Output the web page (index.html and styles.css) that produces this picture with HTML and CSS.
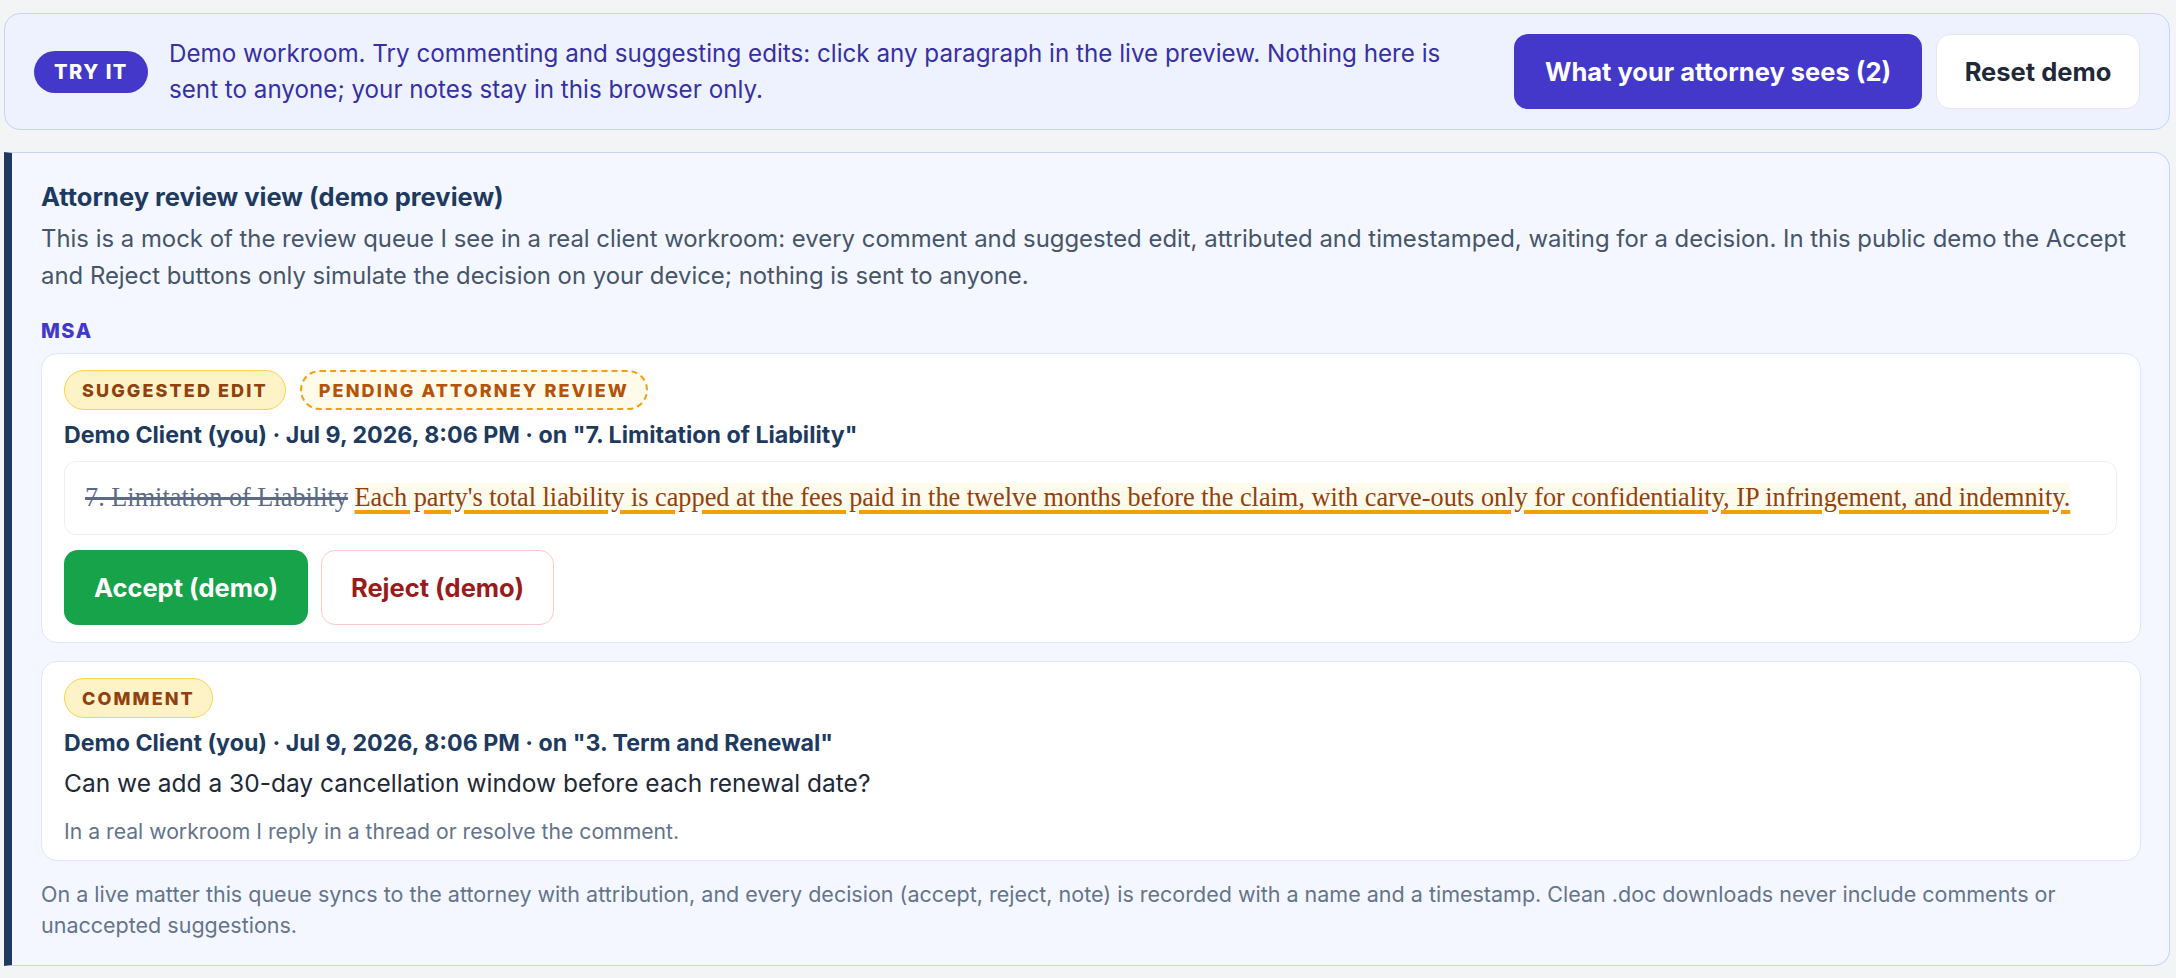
FILE: index.html
```html
<!DOCTYPE html>
<html lang="en">

<head>
    <meta charset="UTF-8">
    <title>Demo workroom</title>
    <link rel="stylesheet" href="styles.css">
</head>

<body>
    <div class="page">
        <div class="demo-bar">
            <span class="try-pill">TRY IT</span>
            <p class="demo-note">Demo workroom. Try commenting and suggesting edits: click any paragraph in the live preview. Nothing here is sent to anyone; your notes stay in this browser only.</p>
            <div class="demo-actions">
                <button class="btn btn-primary">What your attorney sees (2)</button>
                <button class="btn btn-plain">Reset demo</button>
            </div>
        </div>

        <div class="review">
            <h2 class="review-title">Attorney review view (demo preview)</h2>
            <p class="review-intro">This is a mock of the review queue I see in a real client workroom: every comment and suggested edit, attributed and timestamped, waiting for a decision. In this public demo the Accept and Reject buttons only simulate the decision on your device; nothing is sent to anyone.</p>

            <div class="doc-name">MSA</div>

            <div class="item">
                <div class="tags">
                    <span class="tag tag-kind">SUGGESTED EDIT</span>
                    <span class="tag tag-pending">PENDING ATTORNEY REVIEW</span>
                </div>
                <div class="meta">Demo Client (you) · Jul 9, 2026, 8:06 PM · on "7. Limitation of Liability"</div>
                <div class="diff">
                    <del>7. Limitation of Liability</del> <ins>Each party's total liability is capped at the fees paid in the twelve months before the claim, with carve-outs only for confidentiality, IP infringement, and indemnity.</ins>
                </div>
                <div class="decide">
                    <button class="btn btn-accept">Accept (demo)</button>
                    <button class="btn btn-reject">Reject (demo)</button>
                </div>
            </div>

            <div class="item item-comment">
                <div class="tags">
                    <span class="tag tag-kind">COMMENT</span>
                </div>
                <div class="meta">Demo Client (you) · Jul 9, 2026, 8:06 PM · on "3. Term and Renewal"</div>
                <div class="comment-text">Can we add a 30-day cancellation window before each renewal date?</div>
                <div class="comment-hint">In a real workroom I reply in a thread or resolve the comment.</div>
            </div>

            <p class="review-foot">On a live matter this queue syncs to the attorney with attribution, and every decision (accept, reject, note) is recorded with a name and a timestamp. Clean .doc downloads never include comments or unaccepted suggestions.</p>
        </div>
    </div>
</body>

</html>
```

FILE: styles.css
```css
html,
body {
    margin: 0;
    padding: 0;
    background-color: #f3f4f6;
    font-family: Inter, "Noto Sans", "Liberation Sans", sans-serif;
}

.page {
    padding: 13px 6px 13px 4px;
}

/* top demo banner */
.demo-bar {
    display: flex;
    align-items: center;
    gap: 21px;
    padding: 20px 29px 20px 29px;
    background-color: #eef2ff;
    border: 1.5px solid #c7d2fe;
    border-radius: 16px;
}

.try-pill {
    flex: none;
    width: 114px;
    height: 42px;
    line-height: 42px;
    text-align: center;
    border-radius: 21px;
    background-color: #4338ca;
    color: #fff;
    font-size: 20px;
    font-weight: 800;
    letter-spacing: 1.5px;
}

.demo-note {
    flex: 1;
    margin: 0;
    color: #3730a3;
    font-size: 24.2px;
    line-height: 36px;
}

.demo-actions {
    display: flex;
    gap: 14px;
    flex: none;
    margin-left: 27px;
}

.btn {
    height: 75px;
    padding: 0 20px;
    border-radius: 14px;
    font-family: inherit;
    font-size: 25.5px;
    font-weight: 700;
    cursor: pointer;
}

.btn-primary {
    width: 408px;
    border: none;
    background-color: #4338ca;
    color: #fff;
}

.btn-plain {
    width: 204px;
    background-color: #fff;
    border: 1.5px solid #e5e7eb;
    color: #1f2937;
}

/* review panel */
.review {
    margin-top: 22px;
    padding: 28px 28px 24px 29px;
    background-color: #f4f7ff;
    border: 1.5px solid #c7d2fe;
    border-left: 8px solid #1e3a5f;
    border-radius: 0 16px 16px 0;
}

.review-title {
    margin: 0;
    color: #1e3a5f;
    font-size: 25.5px;
    font-weight: 700;
    line-height: 32px;
}

.review-intro {
    margin: 7px 0 0;
    color: #475569;
    font-size: 23.9px;
    line-height: 37px;
}

.doc-name {
    margin-top: 25px;
    color: #4338ca;
    font-size: 20px;
    font-weight: 800;
    letter-spacing: 1.5px;
    line-height: 24px;
}

.item {
    display: flex;
    flex-direction: column;
    align-items: flex-start;
    margin-top: 10px;
    padding: 16px 23px 17px 22px;
    background-color: #fff;
    border: 1.5px solid #dfe6fd;
    border-radius: 16px;
}

.item + .item {
    margin-top: 18px;
}

.item-comment {
    padding-bottom: 14px;
}

.tags {
    display: flex;
    gap: 14px;
}

.tag {
    box-sizing: border-box;
    display: inline-flex;
    align-items: center;
    height: 40px;
    padding: 0 17px;
    border-radius: 20px;
    font-size: 18px;
    font-weight: 800;
    letter-spacing: 2.1px;
}

.tag-kind {
    background-color: #fef3c7;
    border: 1.5px solid #fcd34d;
    color: #92400e;
}

.tag-pending {
    background-color: #fffbeb;
    border: 2px dashed #f59e0b;
    color: #b45309;
}

.meta {
    margin-top: 11px;
    color: #1e3a5f;
    font-size: 23.2px;
    font-weight: 700;
    line-height: 28px;
}

.diff {
    align-self: stretch;
    margin-top: 12px;
    padding: 19px 20px;
    border: 1.5px solid #eceff4;
    border-radius: 12px;
    font-family: "Liberation Serif", "DejaVu Serif", serif;
    font-size: 26.3px;
    line-height: 34px;
}

.diff del {
    color: #5b6b85;
    text-decoration-thickness: 3px;
}

.diff ins {
    color: #92400e;
    background-color: #fefbec;
    text-decoration: underline;
    text-decoration-color: #f59e0b;
    text-decoration-thickness: 3.5px;
    text-underline-offset: 4px;
}

.decide {
    display: flex;
    gap: 13px;
    margin-top: 15px;
}

.btn-accept {
    width: 244px;
    border: none;
    background-color: #16a34a;
    color: #fff;
}

.btn-reject {
    width: 233px;
    background-color: #fff;
    border: 1.5px solid #fecaca;
    color: #991b1b;
}

.comment-text {
    margin-top: 9px;
    color: #1f2937;
    font-size: 24.5px;
    line-height: 34px;
}

.comment-hint {
    margin-top: 16px;
    color: #64748b;
    font-size: 21.2px;
    line-height: 30px;
}

.review-foot {
    margin: 18px 0 0;
    color: #64748b;
    font-size: 21.5px;
    line-height: 31px;
}
```
